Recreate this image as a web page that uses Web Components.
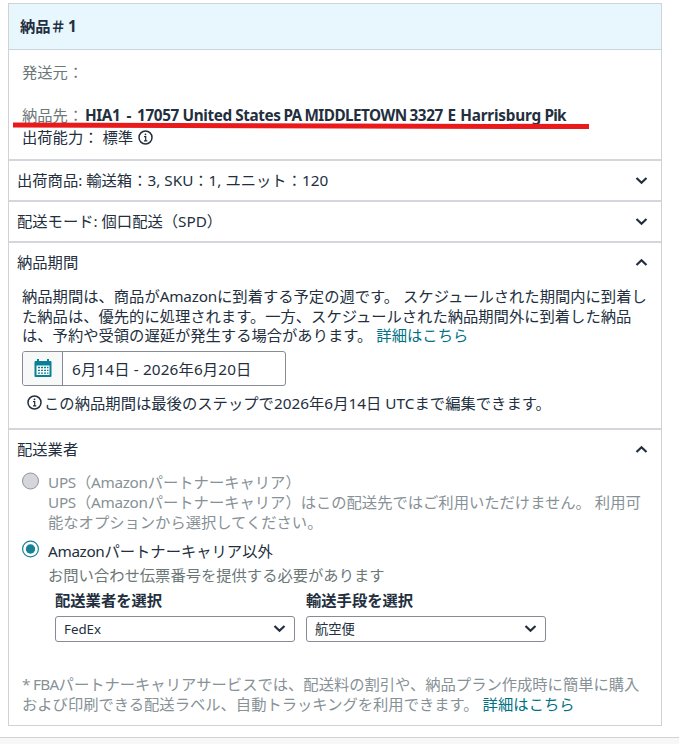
<!DOCTYPE html>
<html lang="ja">
<head>
<meta charset="utf-8">
<title>納品</title>
<style>
    html, body { margin: 0; height: 100%; }
    body {
        display: flex;
        flex-direction: column;
        background: #fff;
        color: #232f3e;
        font: 15.3px/20px "Noto Sans", "Noto Sans CJK JP", sans-serif;
        white-space: nowrap;
        overflow: hidden;
    }
    span { letter-spacing: var(--ls, 0); word-spacing: var(--ws, 0); }
    .gray { color: #879196; }
    a { color: #007185; text-decoration: none; letter-spacing: .05px; }
</style>
</head>
<body>
<ship-card>
    <span slot="title">納品<span style="--ls:2px">＃</span>1</span>
    <ship-address>
        <span slot="from">発送元：</span>
        <span slot="to-label">納品先：</span>
        <span slot="to" style="--ls:-.39px"><span style="--ws:2.5px">HIA1 - </span>17057 United States<span style="--ls:-.55px;--ws:-.6px"> PA MIDDLETOWN </span><span style="--ws:1px">3327 E </span><span style="--ls:-.2px">Harrisburg</span> <span style="--ls:-.8px">Pik</span></span>
        <span slot="capability">出荷能力： 標準</span>
    </ship-address>
    <ship-section>
        <span slot="label">出荷商品: 輸送箱：3, SKU：1, ユニット：120</span>
    </ship-section>
    <ship-section>
        <span slot="label">配送モード: 個口配送（SPD）</span>
    </ship-section>
    <ship-section open style="--body-height:146px">
        <span slot="label">納品期間</span>
        <ship-note>納品期間は、商品が<span style="--ls:-.2px">Amazon</span>に到着する予定の週です。 スケジュールされた期間内に到着し<br>た納品は、優先的に処理されます。一方、スケジュールされた納品期間外に到着した納品<br>は、予約や受領の遅延が発生する場合があります。 <a>詳細はこちら</a></ship-note>
        <date-field><span style="--ls:.15px">6月14日 - 2026年6月20日</span></date-field>
        <info-line><span style="--ls:.03px">この納品期間は最後のステップで2026年6月14日 UTCまで編集できます。</span></info-line>
    </ship-section>
    <ship-section open>
        <span slot="label">配送業者</span>
        <carrier-option disabled>
            <span slot="name"><span style="--ls:-.3px">UPS（Amazon</span>パートナーキャリア）</span>
            <span><span style="--ls:-.3px">UPS（Amazon</span>パートナーキャリア）はこの配送先ではご利用いただけません。 利用可<br>能なオプションから選択してください。</span>
        </carrier-option>
        <carrier-option checked>
            <span slot="name"><span style="--ls:-.35px">Amazon</span>パートナーキャリア以外</span>
            <span>お問い合わせ伝票番号を提供する必要があります</span>
        </carrier-option>
        <select-row>
            <select-field label="配送業者を選択" value="FedEx"></select-field>
            <select-field label="輸送手段を選択" value="航空便"></select-field>
        </select-row>
        <ship-note class="gray" style="padding-top:33px"><span style="--ls:-.7px">* FBA</span>パートナーキャリアサービスでは、配送料の割引や、納品プラン作成時に簡単に購入<br>および印刷できる配送ラベル、自動トラッキングを利用できます。 <a>詳細はこちら</a></ship-note>
    </ship-section>
</ship-card>
<page-footer></page-footer>

<script>
class BaseElement extends HTMLElement {
    connectedCallback() {
        if (this.shadowRoot) return;
        const template = document.createElement('template');
        template.innerHTML = this.render();
        this.attachShadow({ mode: 'open' }).appendChild(template.content.cloneNode(true));
    }
}

customElements.define('ship-card', class extends BaseElement {
    render() {
        return `
            <style>
                :host {
                    display: flex; flex-direction: column; box-sizing: border-box;
                    width: 654px; height: 723px; margin: 3px 0 0 8px;
                    border: 1px solid #d0d2d7; flex: none;
                }
                header {
                    height: 45px; padding-left: 11px; flex: none;
                    background: #e8f6fe; border-bottom: 1px solid #cdd3da;
                    font-weight: 700; line-height: 45px;
                }
            </style>
            <header><slot name="title"></slot></header>
            <slot></slot>`;
    }
});

customElements.define('ship-address', class extends BaseElement {
    render() {
        return `
            <style>
                :host {
                    display: flex; flex-direction: column; position: relative;
                    box-sizing: border-box; height: 109px; padding: 12px 0 0 13px; flex: none;
                }
                .from, .label { color: #6c7778; }
                .from { margin-bottom: 23px; }
                .to { margin-bottom: 2px; display: flex; }
                .label { width: 63px; }
                b { font-weight: 700; }
                .cap { display: flex; align-items: center; gap: 5px; }
                /* marker stroke drawn over the address */
                .marker { position: absolute; left: 4px; top: 71px; }
            </style>
            <div class="from"><slot name="from"></slot></div>
            <div class="to"><span class="label"><slot name="to-label"></slot></span><b><slot name="to"></slot></b></div>
            <div class="cap"><slot name="capability"></slot><info-icon></info-icon></div>
            <svg class="marker" width="577" height="9"><path d="M0 4L576 5.6" stroke="#e81a1c" stroke-width="5"/></svg>`;
    }
});

customElements.define('ship-section', class extends BaseElement {
    render() {
        const open = this.hasAttribute('open');
        return `
            <style>
                :host { display: block; border-top: 2px solid #d5d6dc; flex: none; }
                header {
                    display: flex; align-items: center; justify-content: space-between;
                    height: 39px; padding: 0 13px 0 8px;
                }
                .label { padding-bottom: 2px; }
                .body { padding-left: 13px; height: var(--body-height, auto); }
            </style>
            <header><div class="label"><slot name="label"></slot></div><chevron-icon ${open ? 'up' : ''}></chevron-icon></header>
            ${open ? '<div class="body"><slot></slot></div>' : ''}`;
    }
});

customElements.define('ship-note', class extends BaseElement {
    render() {
        return `
            <style>:host { display: block; line-height: 19.5px; padding-top: 5px; }</style>
            <slot></slot>`;
    }
});

customElements.define('date-field', class extends BaseElement {
    render() {
        return `
            <style>
                :host {
                    display: flex; box-sizing: border-box; width: 264px; height: 35px;
                    margin-top: 5px; border: 1px solid #868b94; border-radius: 3px; line-height: 34px;
                }
                .icon {
                    display: flex; align-items: center; justify-content: center;
                    width: 39px; background: #f7f8f8; border-right: 1px solid #868b94;
                    border-radius: 2px 0 0 2px;
                }
                .value { padding-left: 9px; }
            </style>
            <div class="icon">
                <svg width="18" height="20" viewBox="0 0 18 20">
                    <path d="M3 1h2v2h8V1h2v2h1.500a1 1 0 0 1 1 1v14a1 1 0 0 1-1 1h-15a1 1 0 0 1-1-1V4a1 1 0 0 1 1-1H3z" fill="#0a8095"/>
                    <path d="M2.500 7.500h13v9.500h-13z" fill="#fff"/>
                    <path d="M4 9.500h2m1 0h2m1 0h2m1 0h1.500M4 12.300h2m1 0h2m1 0h2m1 0h1.500M4 15.100h2m1 0h2m1 0h2m1 0h1.500" stroke="#0a8095" stroke-width="1.300"/>
                </svg>
            </div>
            <div class="value"><slot></slot></div>`;
    }
});

customElements.define('info-line', class extends BaseElement {
    render() {
        return `
            <style>:host { display: flex; align-items: center; gap: 2px; padding: 7px 0 0 5px; }</style>
            <info-icon></info-icon><slot></slot>`;
    }
});

customElements.define('info-icon', class extends BaseElement {
    render() {
        return `
            <style>:host { display: block; width: 15px; height: 15px; } svg { display: block; }</style>
            <svg width="15" height="15" viewBox="0 0 15 15">
                <circle cx="7.500" cy="7.500" r="6.500" fill="none" stroke="#232f3e" stroke-width="1.500"/>
                <path d="M6 6.700h1.700v4M6 10.800h3.300" fill="none" stroke="#232f3e" stroke-width="1.200"/>
                <circle cx="7.500" cy="4.300" r=".9" fill="#232f3e"/>
            </svg>`;
    }
});

customElements.define('chevron-icon', class extends BaseElement {
    render() {
        const d = this.hasAttribute('up') ? 'M1.500 7L6.500 2.200L11.500 7' : 'M1.500 2L6.500 6.800L11.500 2';
        return `
            <style>:host { display: block; } svg { display: block; }</style>
            <svg width="13" height="9" viewBox="0 0 13 9"><path d="${d}" fill="none" stroke="#232f3e" stroke-width="2.200"/></svg>`;
    }
});

customElements.define('carrier-option', class extends BaseElement {
    render() {
        const disabled = this.hasAttribute('disabled');
        return `
            <style>
                :host { display: flex; gap: 9px; padding-top: ${disabled ? '3px' : '9px'}; }
                svg { flex: none; margin-top: ${disabled ? '0' : '-1px'}; }
                .name { color: ${disabled ? '#879196' : '#232f3e'}; line-height: 20px; }
                .desc { color: ${disabled ? '#879196' : '#6c7778'}; line-height: ${disabled ? '19.5px' : '20px'}; margin-top: ${disabled ? '1px' : '4px'}; }
            </style>
            <svg width="17" height="18" viewBox="0 0 17 18">
                ${disabled
                    ? '<circle cx="8.500" cy="9" r="8" fill="#d5d6dc" stroke="#8f949c"/>'
                    : '<circle cx="8.500" cy="9" r="7.900" fill="#fff" stroke="#178297" stroke-width="1.200"/><circle cx="8.500" cy="9" r="4.700" fill="#178297"/>'}
            </svg>
            <div>
                <div class="name"><slot name="name"></slot></div>
                <div class="desc"><slot></slot></div>
            </div>`;
    }
});

customElements.define('select-row', class extends BaseElement {
    render() {
        return `
            <style>:host { display: flex; gap: 11px; padding: 5px 0 0 33px; }</style>
            <slot></slot>`;
    }
});

customElements.define('select-field', class extends BaseElement {
    render() {
        return `
            <style>
                :host { display: block; width: 240px; }
                .label { font-weight: 700; margin-bottom: 6px; }
                .box {
                    display: flex; align-items: center; justify-content: space-between;
                    box-sizing: border-box; height: 26px; padding: 0 8px;
                    border: 1px solid #868b94; border-radius: 3px; font-size: 13.3px;
                }
                chevron-icon { margin-top: -2px; }
            </style>
            <div class="label">${this.getAttribute('label')}</div>
            <div class="box"><span>${this.getAttribute('value')}</span><chevron-icon></chevron-icon></div>`;
    }
});

customElements.define('page-footer', class extends BaseElement {
    render() {
        return `<style>:host { display: block; flex: 1; margin-top: 11px; background: #f7f7f7; border-top: 1px solid #d0d2d4; }</style>`;
    }
});
</script>
</body>
</html>
